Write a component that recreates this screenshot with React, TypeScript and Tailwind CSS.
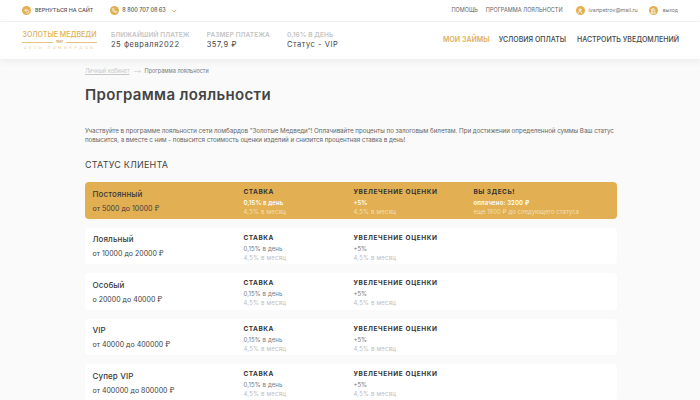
import { ChevronDown, MoveRight, Phone, User, Undo2, DoorOpen } from "lucide-react";

const tiers = [
  { name: "Постоянный", range: "от 5000 до 10000 ₽", active: true },
  { name: "Лояльный", range: "от 10000 до 20000 ₽" },
  { name: "Особый", range: "о 20000 до 40000 ₽" },
  { name: "VIP", range: "от 40000 до 400000 ₽" },
  { name: "Супер VIP", range: "от 400000 до 800000 ₽" },
];

function Dot({ children }: { children: React.ReactNode }) {
  return (
    <span className="flex h-[9px] w-[9px] items-center justify-center rounded-full bg-[#e2b053] text-white">
      {children}
    </span>
  );
}

function Stat({ label, value }: { label: string; value: string }) {
  return (
    <div>
      <div className="text-[6.5px] leading-[9px] font-semibold tracking-[0.1px] text-[#c4c4c4]">{label}</div>
      <div className="text-[7.5px] leading-[10px] tracking-[0.55px] text-[#444]">{value}</div>
    </div>
  );
}

function TierRow({ name, range, active }: { name: string; range: string; active?: boolean }) {
  const sub = active ? "text-[#f3dfb6]" : "text-[#bdbdbd]";
  const top = active ? "text-white font-semibold" : "text-[#777]";
  return (
    <div
      className={`flex h-[36.5px] shrink-0 items-stretch rounded-[4px] pl-[7.5px] ${active ? "bg-[#e2b053]" : "bg-white"}`}
    >
      <div className="w-[151px] pt-[6.5px]">
        <div className="text-[8px] leading-[10px] font-medium tracking-[0.1px] text-[#3a3a3a]">{name}</div>
        <div className="mt-[5px] text-[7px] leading-[10px] text-[#3f3f3f]">{range}</div>
      </div>
      <div className="w-[110px] pt-[6px]">
        <div className="text-[6.5px] leading-[9px] font-bold tracking-[0.5px] text-[#333]">СТАВКА</div>
        <div className={`mt-[2px] text-[6px] leading-[8px] tracking-[0.1px] ${top}`}>0,15% в день</div>
        <div className={`mt-[1px] text-[6px] leading-[8px] tracking-[0.2px] ${sub}`}>4,5% в месяц</div>
      </div>
      <div className="w-[120px] pt-[6px]">
        <div className="text-[6.5px] leading-[9px] font-bold tracking-[0.6px] text-[#333]">УВЕЛЕЧЕНИЕ ОЦЕНКИ</div>
        <div className={`mt-[2px] text-[6px] leading-[8px] ${top}`}>+5%</div>
        <div className={`mt-[1px] text-[6px] leading-[8px] tracking-[0.2px] ${sub}`}>4,5% в месяц</div>
      </div>
      {active && (
        <div className="pt-[6px]">
          <div className="text-[6.5px] leading-[9px] font-bold tracking-[0.5px] text-[#333]">ВЫ ЗДЕСЬ!</div>
          <div className="mt-[2px] text-[6px] leading-[8px] font-semibold tracking-[0.15px] text-white">оплачено: 3200 ₽</div>
          <div className="mt-[1px] text-[6px] leading-[8px] text-[#f3dfb6]">еще 1800 ₽ до следующего статуса</div>
        </div>
      )}
    </div>
  );
}

export default function App() {
  return (
    <div className="flex h-[400px] w-[700px] flex-col overflow-hidden bg-[#fafafa] font-['Inter','DejaVu_Sans',sans-serif]">
      <div className="flex h-[22px] shrink-0 items-center justify-between border-b border-[#f5f5f5] bg-white pr-[22px] pl-[22px]">
        <div className="flex items-center">
          <Dot><Undo2 size={6} strokeWidth={3} /></Dot>
          <span className="ml-[4px] text-[5.4px] font-medium text-[#555]">ВЕРНУТЬСЯ НА САЙТ</span>
          <span className="ml-[17px]"><Dot><Phone size={5} strokeWidth={3} /></Dot></span>
          <span className="ml-[3px] text-[5.5px] font-medium text-[#555]">8 800 707 08 63</span>
          <ChevronDown size={8} strokeWidth={2.5} className="ml-[4px] text-[#e2b053]" />
        </div>
        <div className="flex items-center">
          <span className="text-[5.5px] text-[#666]">ПОМОЩЬ</span>
          <span className="ml-[8px] text-[5.5px] text-[#666]">ПРОГРАММА ЛОЯЛЬНОСТИ</span>
          <span className="ml-[13px]"><Dot><User size={6} strokeWidth={3} /></Dot></span>
          <span className="ml-[4px] text-[5.4px] text-[#777]">ivanpetrov@mail.ru</span>
          <span className="ml-[11px]"><Dot><DoorOpen size={6} strokeWidth={2.5} /></Dot></span>
          <span className="ml-[5px] text-[5px] text-[#777]">выход</span>
        </div>
      </div>

      <header className="z-10 flex h-[37px] shrink-0 items-center justify-between bg-white pr-[21px] pl-[22px] shadow-[0_2px_8px_rgba(0,0,0,0.07)]">
        <div className="flex items-center">
          <div className="flex w-[75px] flex-col items-center">
            <div className="text-[7.05px] leading-[9px] font-medium whitespace-nowrap text-[#e2b053]">ЗОЛОТЫЕ МЕДВЕДИ</div>
            <div className="mt-[1px] flex w-full items-center gap-[3px]">
              <span className="h-px flex-1 bg-[#e9c680]" />
              <span className="text-[3px] leading-[4px] font-bold text-[#c9a253]">1997</span>
              <span className="h-px flex-1 bg-[#e9c680]" />
            </div>
            <div className="mt-[1px] text-[4px] leading-[6px] tracking-[2.4px] whitespace-nowrap text-[#ecd09a]">СЕТЬ ЛОМБАРДОВ</div>
          </div>
          <div className="ml-[14px] flex gap-[17px]">
            <Stat label="БЛИЖАЙШИЙ ПЛАТЕЖ" value="25 февраля2022" />
            <Stat label="РАЗМЕР ПЛАТЕЖА" value="357,9 ₽" />
            <Stat label="0,16% В ДЕНЬ" value="Статус - VIP" />
          </div>
        </div>
        <nav className="flex items-center text-[7px] font-medium text-[#444]">
          <span className="font-semibold text-[#e2b053]">МОИ ЗАЙМЫ</span>
          <span className="ml-[9px]">УСЛОВИЯ ОПЛАТЫ</span>
          <span className="ml-[11px]">НАСТРОИТЬ УВЕДОМЛЕНИЙ</span>
        </nav>
      </header>

      <main className="flex flex-col pr-[83px] pl-[85px]">
        <div className="mt-[9px] flex items-center text-[5.5px] leading-[7px]">
          <span className="text-[#c8c8c8] italic underline">Личный кабинет</span>
          <MoveRight size={7} className="mx-[4px] text-[#c8c8c8]" />
          <span className="text-[#777]">Программа лояльности</span>
        </div>
        <h1 className="mt-[9px] text-[15px] leading-[22px] font-semibold tracking-[0.35px] text-[#444]">Программа лояльности</h1>
        <p className="mt-[21px] text-[6.25px] leading-[9px] tracking-[-0.05px] text-[#666]">
          Участвуйте в программе лояльности сети ломбардов "Золотые Медведи"! Оплачивайте проценты по залоговым билетам. При достижении определенной суммы Ваш статус повысится, а вместе с ним - повысится стоимость оценки изделий и снизится процентная ставка в день!
        </p>
        <h2 className="mt-[13px] text-[9px] leading-[13px] font-normal tracking-[0.2px] text-[#444]">СТАТУС КЛИЕНТА</h2>
        <div className="mt-[11px] flex flex-col gap-[9px]">
          {tiers.map((t) => (
            <TierRow key={t.name} {...t} />
          ))}
        </div>
      </main>
    </div>
  );
}
